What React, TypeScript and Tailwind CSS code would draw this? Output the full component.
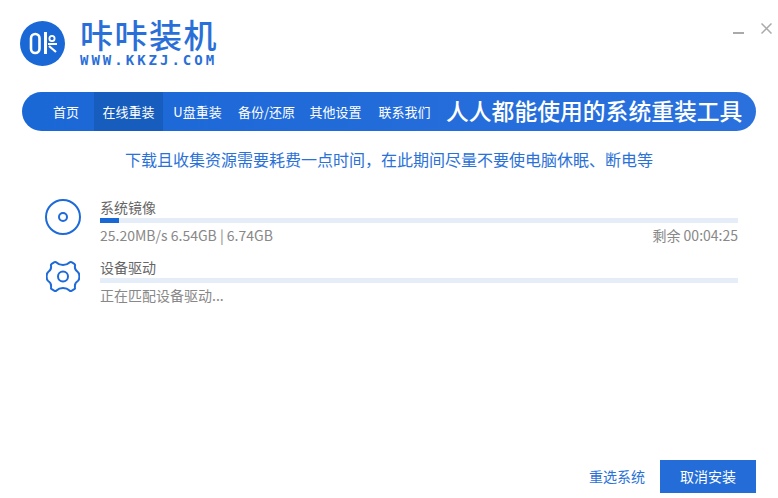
const cjk = "font-['Noto_Sans_CJK_SC','Liberation_Sans',sans-serif]";

const navItems = [
  { label: "首页", width: "w-[62px] pl-[6px]" },
  { label: "在线重装", width: "w-[69px]", active: true },
  { label: "U盘重装", width: "w-[69px]" },
  { label: "备份/还原", width: "w-[69px]" },
  { label: "其他设置", width: "w-[69px]" },
  { label: "联系我们", width: "w-[69px]" },
];

function DiscIcon() {
  return (
    <svg width="36" height="36" viewBox="0 0 36 36" fill="none" stroke="#1d6ad8" strokeWidth="2">
      <circle cx="18" cy="18" r="17" />
      <circle cx="18" cy="18" r="4" />
    </svg>
  );
}

function GearIcon() {
  return (
    <svg width="34" height="33" viewBox="0 0 34 33" fill="none" stroke="#1d6ad8" strokeWidth="2" strokeLinejoin="round">
      <path d="M17 5C20 5 22 4 23.500 2.500C24 2 24.800 1.800 25.500 2.200L28.300 3.800C29 4.200 29.200 5 29 5.800C28.600 8 29.500 10.500 31.800 12C33 12.900 33.400 14.500 33.400 16.500C33.400 18.500 33 20.100 31.800 21C29.500 22.500 28.600 25 29 27.200C29.200 28 29 28.800 28.300 29.200L25.500 30.800C24.800 31.200 24 31 23.500 30.500C22 29 20 28 17 28C14 28 12 29 10.500 30.500C10 31 9.200 31.200 8.500 30.800L5.700 29.200C5 28.800 4.800 28 5 27.200C5.400 25 4.500 22.500 2.200 21C1 20.100 .6 18.500 .6 16.500C.6 14.500 1 12.900 2.200 12C4.500 10.500 5.400 8 5 5.800C4.800 5 5 4.200 5.700 3.800L8.500 2.200C9.200 1.800 10 2 10.500 2.500C12 4 14 5 17 5z" />
      <circle cx="17" cy="16.500" r="5" />
    </svg>
  );
}

function LogoMark() {
  return (
    <svg width="45" height="45" viewBox="0 0 45 45" className="mt-[4px] shrink-0">
      <circle cx="22.500" cy="22.500" r="22.500" fill="#1a67d6" />
      <rect x="11" y="13" width="8.500" height="19" rx="4.200" fill="none" stroke="#fff" strokeWidth="2.600" />
      <path d="M25.500 11v22" stroke="#fff" strokeWidth="3" fill="none" />
      <circle cx="32" cy="17.500" r="2.600" fill="none" stroke="#fff" strokeWidth="1.800" />
      <path d="M28 23h9M29 25l7 6" stroke="#fff" strokeWidth="2.200" fill="none" />
    </svg>
  );
}

export default function App() {
  return (
    <div className={`w-[778px] h-[498px] bg-white flex flex-col overflow-hidden ${cjk}`}>
      {/* header */}
      <div className="h-[92px] shrink-0 flex items-start justify-between">
        <div className="flex items-start gap-[15px] pl-[20px] pt-[17px]">
          <LogoMark />
          <div className="flex flex-col w-[140px]">
            <span className="text-[33px] leading-[34px] font-medium text-[#2a6fd8] tracking-[1.500px] whitespace-nowrap">咔咔装机</span>
            <span className="mt-[2px] text-[14px] leading-[14px] font-bold text-[#2a6fd8] tracking-[3px] whitespace-nowrap font-['DejaVu_Sans_Mono',monospace]">WWW.KKZJ.COM</span>
          </div>
        </div>
        <div className="flex items-start gap-[17px] pt-[23px] pr-[6px]">
          <div className="w-[11px] h-[2px] bg-[#aaaaaa] mt-[9px]" />
          <svg width="11" height="11" viewBox="0 0 11 11" stroke="#aaaaaa" strokeWidth="1.500" fill="none">
            <path d="M.5.500l10 10M10.500.500l-10 10" />
          </svg>
        </div>
      </div>

      {/* nav */}
      <div className="mx-[22px] h-[39px] shrink-0 rounded-full bg-gradient-to-r from-[#1a67d6] to-[#2a71de] flex items-stretch pl-[10px] text-white overflow-hidden">
        {navItems.map((item) => (
          <div
            key={item.label}
            className={`${item.width} flex items-center justify-center text-[13px] whitespace-nowrap ${item.active ? "bg-[#175dbd]" : ""}`}
          >
            {item.label}
          </div>
        ))}
        <div className="ml-[7px] flex items-center text-[22.800px] font-medium whitespace-nowrap">人人都能使用的系统重装工具</div>
      </div>

      <p className="mt-[16px] text-center text-[16px] leading-[24px] text-[#2a71d8]">下载且收集资源需要耗费一点时间，在此期间尽量不要使电脑休眠、断电等</p>

      {/* tasks */}
      <div className="mt-[28px] pl-[45px] pr-[40px] flex flex-col gap-[14px]">
        <div className="flex items-start gap-[19px]">
          <DiscIcon />
          <div className="flex-1 flex flex-col">
            <span className="text-[14px] leading-[16px] text-[#666666]">系统镜像</span>
            <div className="mt-[3px] h-[5px] bg-[#e5edf8]">
              <div className="h-full w-[19px] bg-[#1a67d6]" />
            </div>
            <div className="mt-[3px] flex justify-between text-[14px] leading-[19px] text-[#888888]">
              <span>25.20MB/s 6.54GB | 6.74GB</span>
              <span>剩余 00:04:25</span>
            </div>
          </div>
        </div>
        <div className="flex items-start gap-[20px]">
          <div className="pl-[1px] pt-[1px]">
            <GearIcon />
          </div>
          <div className="flex-1 flex flex-col">
            <span className="text-[14px] leading-[16px] text-[#666666]">设备驱动</span>
            <div className="mt-[3px] h-[5px] bg-[#e5edf8]" />
            <span className="mt-[3px] text-[14px] leading-[19px] text-[#888888]">正在匹配设备驱动...</span>
          </div>
        </div>
      </div>

      {/* footer buttons */}
      <div className="mt-auto mb-[5px] pr-[22px] flex items-center justify-end gap-[15px]">
        <span className="text-[14px] text-[#2a71d8]">重选系统</span>
        <div className="w-[96px] h-[33px] bg-[#246dd8] text-white text-[14px] flex items-center justify-center">取消安装</div>
      </div>
    </div>
  );
}
